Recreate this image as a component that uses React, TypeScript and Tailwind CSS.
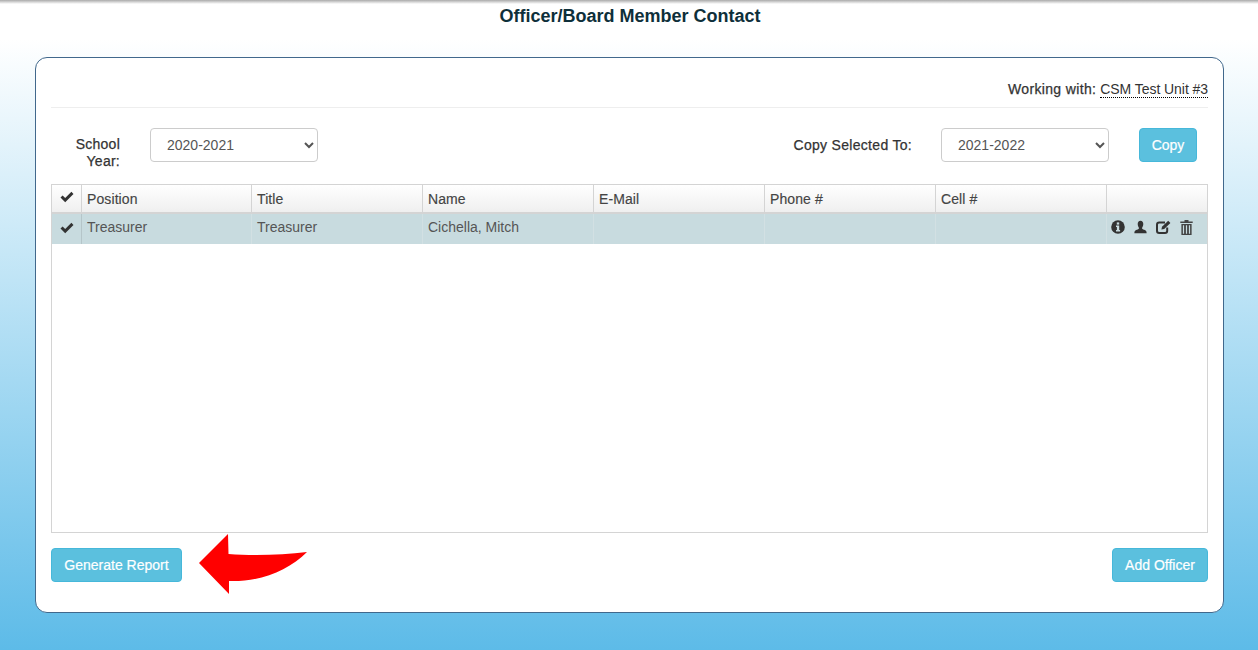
import { ReactNode } from 'react'

const columns = ['Position', 'Title', 'Name', 'E-Mail', 'Phone #', 'Cell #']

function CheckIcon() {
  return (
    <svg width="14" height="12" viewBox="0 0 14 12" fill="#333333">
      <path d="M0.5 6.6 L2.6 4.6 L5.2 7.1 L11.4 0.8 L13.5 2.9 L5.2 11.2 Z" />
    </svg>
  )
}

function InfoIcon() {
  return (
    <svg width="14" height="14" viewBox="0 0 14 14">
      <circle cx="7" cy="7" r="6.8" fill="#333333" />
      <rect x="5.8" y="2.4" width="2.4" height="2.2" fill="#c8dbdf" />
      <path d="M5 5.6 H8.2 V9.9 H9.1 V11.4 H5 V9.9 H5.9 V7 H5 Z" fill="#c8dbdf" />
    </svg>
  )
}

function UserIcon() {
  return (
    <svg width="13" height="14" viewBox="0 0 14 14" fill="#333333">
      <path d="M7 0.3 C9 0.3 10 1.8 10 3.8 C10 5.8 9.2 7.2 8.6 8 C8.6 9 9.4 9.4 11 10 C12.8 10.7 13.6 11.4 13.6 13.7 H0.4 C0.4 11.4 1.2 10.7 3 10 C4.6 9.4 5.4 9 5.4 8 C4.8 7.2 4 5.8 4 3.8 C4 1.8 5 0.3 7 0.3 Z" />
    </svg>
  )
}

function EditIcon() {
  return (
    <svg width="15" height="14" viewBox="0 0 15 14" fill="none">
      <path d="M9 2.6 H3.2 C2 2.6 1 3.6 1 4.8 V10.8 C1 12 2 13 3.2 13 H9 C10.2 13 11.2 12 11.2 10.8 V7.6" stroke="#333333" strokeWidth="2" />
      <path d="M12.2 0.8 L14.4 3 L8.2 9 L5.4 9.6 L6 6.8 Z" fill="#333333" />
    </svg>
  )
}

function TrashIcon() {
  return (
    <svg width="13" height="15" viewBox="0 0 13 15" fill="#444444">
      <path d="M4.5 0 H8.5 V1.4 H12.7 V3 H0.3 V1.4 H4.5 Z" />
      <path d="M1.4 4 H11.6 V15 H1.4 Z M2.9 5.2 V13.8 H4.1 V5.2 Z M5.9 5.2 V13.8 H7.1 V5.2 Z M8.9 5.2 V13.8 H10.1 V5.2 Z" fillRule="evenodd" />
    </svg>
  )
}

function InfoButton({ children, className }: { children: ReactNode; className: string }) {
  return (
    <button className={`h-[34px] rounded border border-[#46b8da] bg-[#5bc0de] text-[14px] text-white [-webkit-text-stroke:0.2px_#ffffff] ${className}`}>
      {children}
    </button>
  )
}

export default function App() {
  return (
    <div className="h-[650px] overflow-hidden bg-[linear-gradient(to_bottom,#ffffff_6%,#5dbbe8_100%)] font-['Liberation_Sans',sans-serif] text-[14px] text-[#333333]">
      <div className="h-[4px] bg-[linear-gradient(to_bottom,#aaaaaa,#ffffff00)]" />
      <h1 className="mt-[2px] pl-[2px] text-center text-[18px] leading-5 font-bold text-[#0e2f3a]">Officer/Board Member Contact</h1>

      <div className="mr-[34px] ml-[35px] mt-[31px] flex h-[556px] flex-col rounded-xl border border-[#41688c] bg-white px-[15px]">
        <div className="mt-[21px] flex h-[29px] items-start justify-end border-b border-[#eeeeee] leading-5">
          <span className="mr-[4px] tracking-[0.35px] [-webkit-text-stroke:0.25px_#333333]">Working with:</span>
          <span className="h-[19px] border-b border-dotted border-black leading-[20px] tracking-[-0.06px]">CSM Test Unit #3</span>
        </div>

        <div className="mt-[20px] flex h-[34px] items-center">
          <div className="mt-[16px] ml-[8px] w-[61px] text-right leading-[17px] tracking-[0.25px] [-webkit-text-stroke:0.25px_#333333]">School Year:</div>
          <select defaultValue="2020-2021" className="ml-[30px] h-[34px] w-[168px] rounded border border-[#cccccc] bg-white pl-3 text-[14px] text-[#555555]">
            <option>2020-2021</option>
          </select>
          <div className="ml-auto tracking-[0.3px] [-webkit-text-stroke:0.25px_#333333]">Copy Selected To:</div>
          <select defaultValue="2021-2022" className="ml-[29px] h-[34px] w-[168px] rounded border border-[#cccccc] bg-white pl-3 text-[14px] text-[#555555]">
            <option>2021-2022</option>
          </select>
          <InfoButton className="mr-[11px] ml-[30px] w-[58px]">Copy</InfoButton>
        </div>

        <div className="mt-[22px] flex h-[349px] flex-col border border-[#d4d4d4]">
          <div className="flex h-[29px] border-b-2 border-[#d4d4d4] bg-[linear-gradient(to_bottom,#ffffff,#efefef)]">
            <div className="flex w-[30px] items-center justify-center border-r border-[#d4d4d4] pb-[4px]">
              <CheckIcon />
            </div>
            {columns.map((c, i) => (
              <div
                key={c}
                className={`flex items-center border-r border-[#d4d4d4] pt-[2px] pl-[5px] tracking-[0.1px] text-[#444444] [-webkit-text-stroke:0.15px_#444444] ${i === 0 ? 'w-[170px]' : 'w-[171px]'}`}
              >
                {c}
              </div>
            ))}
            <div className="flex-1" />
          </div>
          <div className="flex h-[30px] bg-[#c8dbdf] text-[#555555]">
            <div className="flex w-[30px] items-center justify-center border-r border-[#b5c5c9] pb-[2px]">
              <CheckIcon />
            </div>
            {['Treasurer', 'Treasurer', 'Cichella, Mitch', '', '', ''].map((c, i) => (
              <div key={i} className={`flex items-center border-r border-[#d2e0e3] pb-[4px] pl-[5px] ${i === 0 ? 'w-[170px]' : 'w-[171px]'}`}>
                {c}
              </div>
            ))}
            <div className="flex flex-1 items-center justify-end gap-[9px] pr-[14px] pb-[4px]">
              <InfoIcon />
              <UserIcon />
              <EditIcon />
              <TrashIcon />
            </div>
          </div>
        </div>

        <div className="relative mt-[15px] flex justify-between">
          <InfoButton className="w-[131px]">Generate Report</InfoButton>
          <svg className="absolute top-[-15px] left-[147px]" width="110" height="62" viewBox="0 0 110 62">
            <path d="M1 30 L30 1 L30.5 21 C55 23 85 22 109 19 C90 38 62 49 31 48 L31 61 Z" fill="#ff0000" />
          </svg>
          <InfoButton className="w-[96px]">Add Officer</InfoButton>
        </div>
      </div>
    </div>
  )
}
